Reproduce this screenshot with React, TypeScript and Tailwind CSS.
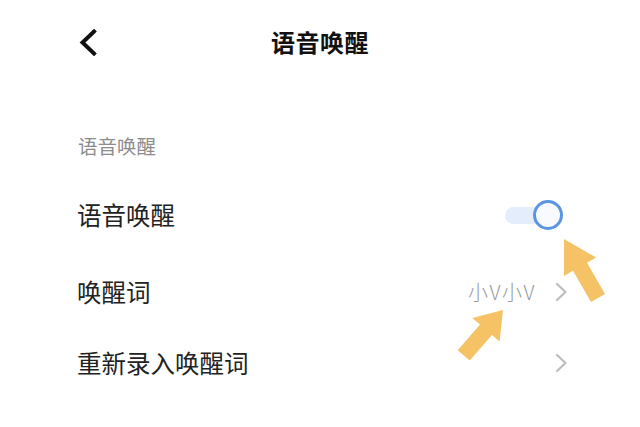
import React from "react";

const font = { fontFamily: '"Noto Sans CJK SC", "Noto Sans", sans-serif' };

function Chevron() {
  return (
    <svg width="13" height="20" viewBox="0 0 13 20" className="block">
      <path d="M2 2 L10.5 10 L2 18" fill="none" stroke="#bdbdbd" strokeWidth="2.2" strokeLinecap="round" strokeLinejoin="round" />
    </svg>
  );
}

export default function App() {
  return (
    <div className="relative w-[640px] h-[427px] bg-white overflow-hidden text-[#222]" style={font}>
      {/* header */}
      <div className="grid grid-cols-[1fr_auto_1fr] items-center h-[84px]">
        <div className="pl-[79px] flex items-center">
          <svg width="18" height="27" viewBox="0 0 18 27" className="block">
            <path d="M15 2.5 L3.5 13.5 L15 24.5" fill="none" stroke="#111" strokeWidth="4" strokeLinecap="square" strokeLinejoin="miter" />
          </svg>
        </div>
        <div className="text-[24px] font-bold leading-none text-[#111] tracking-[0.5px]">语音唤醒</div>
        <div />
      </div>

      {/* section label */}
      <div className="mt-[42px] h-[40px] flex items-center pl-[78px] text-[19.5px] text-[#8c8c8c]">语音唤醒</div>

      {/* row 1 */}
      <div className="mt-[14px] h-[70px] flex items-center justify-between pl-[77px] pr-[77px]">
        <span className="text-[24.5px] leading-none">语音唤醒</span>
        <div className="relative w-[58px] h-[32px] flex items-center">
          <div className="w-[40px] h-[17px] rounded-full bg-[#e3edfb]" />
          <div className="absolute right-0 top-[1px] w-[30px] h-[30px] rounded-full border-[3.5px] border-[#5b95e2] bg-[#f8fafd]" />
        </div>
      </div>

      {/* row 2 */}
      <div className="mt-[7px] h-[70px] flex items-center justify-between pl-[77px] pr-[72px]">
        <span className="text-[24.5px] leading-none">唤醒词</span>
        <div className="flex items-center gap-[19px]">
          <span className="text-[20px] leading-none text-[#9a9a9a] font-light tracking-[1.5px]">小V小V</span>
          <Chevron />
        </div>
      </div>

      {/* row 3 */}
      <div className="mt-[1px] h-[70px] flex items-center justify-between pl-[77px] pr-[72px]">
        <span className="text-[24.5px] leading-none">重新录入唤醒词</span>
        <Chevron />
      </div>

      {/* annotation arrows */}
      <svg className="absolute inset-0 pointer-events-none" width="640" height="427" viewBox="0 0 640 427">
        <polygon
          points="564,239 596,257.5 587,262.7 605,293.9 591,301.9 573,270.7 564,276"
          fill="#f5c265"
        />
        <polygon
          points="503,310 472.4,317.9 480,324.5 457.7,350.2 469.7,360.6 492,334.9 499.6,341.5"
          fill="#f5c265"
        />
      </svg>
    </div>
  );
}
